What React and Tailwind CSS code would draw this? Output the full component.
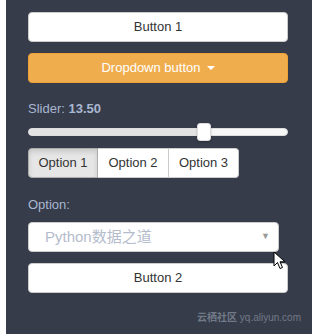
export default function App() {
  return (
    <div
      className="w-[312px] h-[334px] bg-white pl-[6px]"
      style={{ fontFamily: '"Liberation Sans", Arial, "Noto Sans CJK SC", sans-serif' }}
    >
      <div className="relative w-full h-full bg-[#363c4a] pl-[22px] pr-[24px] pt-[12px]">
        {/* Button 1 */}
        <button className="w-full h-[30px] bg-white border border-[#cccccc] rounded-[4px] text-[13px] text-[#333333]">
          Button 1
        </button>

        {/* Dropdown */}
        <button className="mt-[11px] w-full h-[30px] bg-[#f0ad4e] border border-[#eea236] rounded-[4px] text-[13px] text-white flex items-center justify-center gap-[6px]">
          Dropdown button
          <span className="w-0 h-0 border-l-[4px] border-r-[4px] border-t-[4px] border-l-transparent border-r-transparent border-t-white" />
        </button>

        {/* Slider */}
        <div className="mt-[18px] text-[13px] text-[#a9b7d1] leading-[15px]">
          Slider: <span className="font-bold">13.50</span>
        </div>
        <div className="relative mt-[12px] h-[8px] w-full rounded-full bg-[#f7f7f7] border border-[#dddddd]">
          <div className="h-full w-[172px] rounded-l-full bg-[#e3e3e3]" />
          <div className="absolute left-[168px] top-[-6px] w-[14px] h-[18px] bg-white rounded-[3px] border border-[#dddddd] shadow-[0_1px_2px_rgba(0,0,0,0.25)]" />
        </div>

        {/* Button group */}
        <div className="mt-[12px] flex w-[211px] h-[30px] text-[13px] text-[#333333]">
          <button className="w-[70px] bg-[#e6e6e6] border border-[#adadad] rounded-l-[4px] shadow-[inset_0_3px_5px_rgba(0,0,0,0.125)]">
            Option 1
          </button>
          <button className="w-[71px] bg-white border-y border-r border-[#cccccc]">
            Option 2
          </button>
          <button className="w-[70px] bg-white border-y border-r border-[#cccccc] rounded-r-[4px]">
            Option 3
          </button>
        </div>

        {/* Select */}
        <div className="mt-[19px] text-[13px] text-[#a9b7d1] leading-[15px]">Option:</div>
        <div className="mt-[10px] w-[251px] h-[30px] bg-white border border-[#cccccc] rounded-[4px] flex items-center justify-between pl-[16px] pr-[8px]">
          <span className="text-[15px] text-[#b4bccc]">Python数据之道</span>
          <span className="text-[9px] text-[#999999]">▼</span>
        </div>

        {/* Button 2 */}
        <button className="mt-[11px] w-full h-[30px] bg-white border border-[#cccccc] rounded-[4px] text-[13px] text-[#333333]">
          Button 2
        </button>

        {/* watermark */}
        <div className="absolute right-[11px] bottom-[9px] text-[10px] text-[#727a88] font-bold">
          云栖社区 <span className="font-normal">yq.aliyun.com</span>
        </div>

        {/* cursor */}
        <svg
          className="absolute left-[267px] top-[251px]"
          width="14"
          height="20"
          viewBox="0 0 14 20"
        >
          <path
            d="M1 1 L1 15 L4.5 11.5 L7 17.5 L9.5 16.5 L7 10.8 L12 10.8 Z"
            fill="white"
            stroke="black"
            strokeWidth="1"
            strokeLinejoin="round"
          />
        </svg>
      </div>
    </div>
  );
}
